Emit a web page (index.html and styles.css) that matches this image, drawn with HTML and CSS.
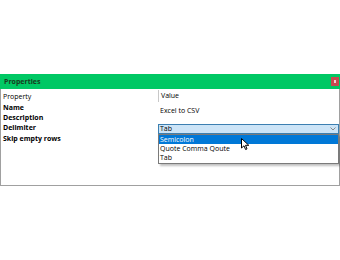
FILE: index.html
```html
<!DOCTYPE html>
<html lang="en">
  <head>
    <meta charset="UTF-8" />
    <title>Properties</title>
    <link rel="stylesheet" href="styles.css">
  </head>
  <body>
    <div class="window">
      <div class="titlebar">
        <span class="title">Properties</span>
        <span class="close"><span class="close-mark"></span></span>
      </div>
      <div class="panel">
        <div class="row header">
          <div class="key">Property</div>
          <div class="val">Value</div>
        </div>
        <div class="row">
          <div class="key bold first">Name</div>
          <div class="val down">Excel to CSV</div>
        </div>
        <div class="row">
          <div class="key bold">Description</div>
          <div class="val"></div>
        </div>
        <div class="row">
          <div class="key bold">Delimiter</div>
          <div class="val">
            <div class="select">
              <span>Tab</span>
              <svg class="chev" width="6" height="4" viewBox="0 0 6 4"><path d="M0.5 0.5 L3 3 L5.5 0.5" fill="none" stroke="#888" stroke-width="1"/></svg>
              <div class="dropdown">
                <div class="opt active">Semicolon</div>
                <div class="opt">Quote Comma Qoute</div>
                <div class="opt">Tab</div>
                <svg class="cursor" width="9" height="13" viewBox="0 0 9 13"><path d="M0.5 0.5 L0.5 10 L3 7.8 L4.6 11.5 L6 10.9 L4.5 7.3 L7.8 7.3 Z" fill="#fff" stroke="#000" stroke-width="1"/></svg>
              </div>
            </div>
          </div>
        </div>
        <div class="row">
          <div class="key bold">Skip empty rows</div>
          <div class="val"></div>
        </div>
      </div>
    </div>
  </body>
</html>
```
FILE: styles.css
```css
body {
  margin: 0;
  background-color: #fff;
  font-family: "Open Sans", "Noto Sans", sans-serif;
  font-size: 7px;
  color: #000;
}

.window {
  margin-top: 74px;
}

.titlebar {
  height: 15px;
  background-color: #00c864;
  display: flex;
  align-items: center;
  justify-content: space-between;
  padding: 0 1px 0 4px;
}

.title {
  font-weight: bold;
  color: #1a3a20;
}

.close {
  width: 8px;
  height: 9px;
  background-color: #c9494f;
  display: flex;
  align-items: center;
  justify-content: center;
}

.close-mark {
  width: 2px;
  height: 3px;
  background-color: #f2d0d2;
}

.panel {
  height: 96px;
  border: 1px solid #a0a0a0;
  border-top: none;
  background-color: #fff;
}

.row {
  display: flex;
  height: 10.5px;
}

.row.header {
  height: 12px;
  align-items: center;
  padding-top: 1px;
}

.key {
  width: 155px;
  padding-left: 2px;
}

.key.first {
  padding-top: 1px;
}

.header .val {
  border-left: 1px solid #c8c8c8;
  height: 12px;
  line-height: 12px;
}

.val {
  flex: 1;
  padding-left: 2px;
  position: relative;
}

.down {
  padding-top: 4px;
}

.bold {
  font-weight: bold;
}

.select {
  margin-left: -2px;
  margin-top: 1px;
  height: 8px;
  border: 1px solid #3c7fb1;
  background-color: #cce4f7;
  display: flex;
  align-items: center;
  justify-content: space-between;
  padding: 0 2px 0 1px;
  line-height: 8px;
  position: relative;
}

.dropdown {
  position: absolute;
  left: -1px;
  right: -1px;
  top: 9px;
  border: 1px solid #7a7a7a;
  background-color: #fff;
  box-shadow: 2px 2px 2px rgba(0, 0, 0, 0.25);
  padding-bottom: 1px;
}

.opt {
  height: 9px;
  line-height: 9px;
  padding-left: 1px;
}

.opt.active {
  background-color: #0078d7;
  color: #fff;
}

.cursor {
  position: absolute;
  left: 82px;
  top: 3px;
}
```
